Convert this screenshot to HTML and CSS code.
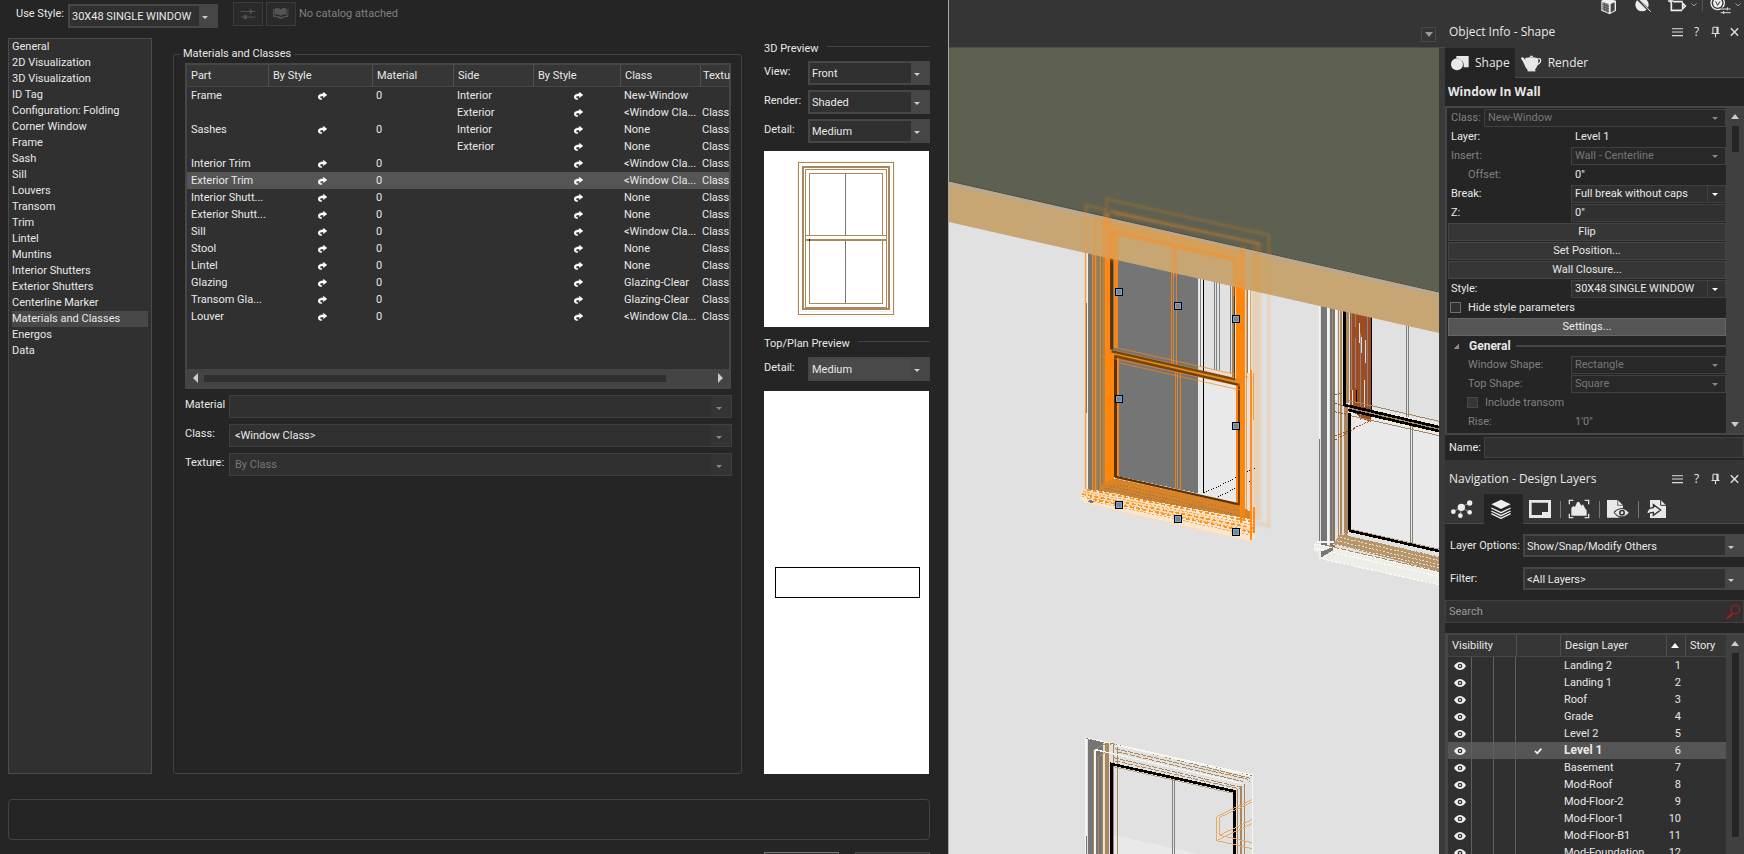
FILE: index.html
```html
<!DOCTYPE html>
<html lang="en">
<head>
<meta charset="utf-8">
<title>Window Settings</title>
<link rel="stylesheet" href="styles.css">
</head>
<body>
<svg class="sprite" aria-hidden="true">
  <symbol id="i-redo" viewBox="0 0 27 24"><path d="M16 0l11 9-11 8v-5c-7 0-10 1-10 4 0 2 2 3 5 3v4C5 23 0 20 0 15 0 9 6 5 16 5z" fill="#fff" stroke="#fff" stroke-width="1"/></symbol>
  <symbol id="i-eye" viewBox="0 0 36 24"><path d="M0 12C6 3 12 0 18 0s12 3 18 12c-6 9-12 12-18 12S6 21 0 12z" fill="#eee"/><circle cx="18" cy="12" r="7" fill="#333"/><circle cx="18" cy="12" r="3" fill="#eee"/></symbol>
  <symbol id="i-menu" viewBox="0 0 30 30"><path d="M0 6h30M0 15h30M0 25h30" stroke="#ddd" stroke-width="3"/></symbol>
  <symbol id="i-pin" viewBox="0 0 30 30"><path d="M8 2h15M8 2v16M19 2v16M22 2v16M4 19h22M15 19v10" stroke="#ddd" stroke-width="3" fill="none"/></symbol>
  <symbol id="i-close" viewBox="0 0 30 30"><path d="M5 5l20 20M25 5L5 25" stroke="#ddd" stroke-width="4"/></symbol>
</svg>
<main class="app">
  <section class="dialog">
    <div class="style-bar">
      <label for="use-style">Use Style:</label>
      <span class="combo combo-style"><select id="use-style"><option>30X48 SINGLE WINDOW</option></select></span>
      <button class="tool" aria-label="Style settings"><svg viewBox="0 0 90 72"><path d="M21 28h48M21 46h48" stroke="#555" stroke-width="3"/><path d="M40 28h12v-6h4v12h-4v-6zM32 40h8v12h-8z" fill="#555" stroke="#555" stroke-width="2"/></svg></button>
      <button class="tool" aria-label="Catalog"><svg viewBox="0 0 90 72"><path d="M19 20v26h10l16 6 14-6h10V20h-3v20l-21 6-22-6V20z" fill="#555"/><path d="M24 18c8-3 15-2 21 3 5-5 12-6 18-3v20c-7-1-13 0-18 4-6-4-13-5-21-4z" fill="#555"/></svg></button>
      <span class="muted">No catalog attached</span>
    </div>
    <div class="dialog-main">
      <ul class="pages">
        <li><button>General</button></li>
        <li><button>2D Visualization</button></li>
        <li><button>3D Visualization</button></li>
        <li><button>ID Tag</button></li>
        <li><button>Configuration: Folding</button></li>
        <li><button>Corner Window</button></li>
        <li><button>Frame</button></li>
        <li><button>Sash</button></li>
        <li><button>Sill</button></li>
        <li><button>Louvers</button></li>
        <li><button>Transom</button></li>
        <li><button>Trim</button></li>
        <li><button>Lintel</button></li>
        <li><button>Muntins</button></li>
        <li><button>Interior Shutters</button></li>
        <li><button>Exterior Shutters</button></li>
        <li><button>Centerline Marker</button></li>
        <li><button class="selected">Materials and Classes</button></li>
        <li><button>Energos</button></li>
        <li><button>Data</button></li>
      </ul>
      <fieldset class="group">
        <legend>Materials and Classes</legend>
        <div class="parts">
          <table class="parts-table">
            <colgroup><col class="c-part"><col class="c-by1"><col class="c-mat"><col class="c-side"><col class="c-by2"><col class="c-class"><col></colgroup>
            <thead><tr><th>Part</th><th>By Style</th><th>Material</th><th>Side</th><th>By Style</th><th>Class</th><th>Textu</th></tr></thead>
            <tbody>
              <tr><td>Frame</td><td><svg><use href="#i-redo"/></svg></td><td>0</td><td>Interior</td><td><svg><use href="#i-redo"/></svg></td><td>New-Window</td><td></td></tr>
              <tr><td></td><td></td><td></td><td>Exterior</td><td><svg><use href="#i-redo"/></svg></td><td>&lt;Window Cla...</td><td>Class</td></tr>
              <tr><td>Sashes</td><td><svg><use href="#i-redo"/></svg></td><td>0</td><td>Interior</td><td><svg><use href="#i-redo"/></svg></td><td>None</td><td>Class</td></tr>
              <tr><td></td><td></td><td></td><td>Exterior</td><td><svg><use href="#i-redo"/></svg></td><td>None</td><td>Class</td></tr>
              <tr><td>Interior Trim</td><td><svg><use href="#i-redo"/></svg></td><td>0</td><td></td><td><svg><use href="#i-redo"/></svg></td><td>&lt;Window Cla...</td><td>Class</td></tr>
              <tr class="selected"><td>Exterior Trim</td><td><svg><use href="#i-redo"/></svg></td><td>0</td><td></td><td><svg><use href="#i-redo"/></svg></td><td>&lt;Window Cla...</td><td>Class</td></tr>
              <tr><td>Interior Shutt...</td><td><svg><use href="#i-redo"/></svg></td><td>0</td><td></td><td><svg><use href="#i-redo"/></svg></td><td>None</td><td>Class</td></tr>
              <tr><td>Exterior Shutt...</td><td><svg><use href="#i-redo"/></svg></td><td>0</td><td></td><td><svg><use href="#i-redo"/></svg></td><td>None</td><td>Class</td></tr>
              <tr><td>Sill</td><td><svg><use href="#i-redo"/></svg></td><td>0</td><td></td><td><svg><use href="#i-redo"/></svg></td><td>&lt;Window Cla...</td><td>Class</td></tr>
              <tr><td>Stool</td><td><svg><use href="#i-redo"/></svg></td><td>0</td><td></td><td><svg><use href="#i-redo"/></svg></td><td>None</td><td>Class</td></tr>
              <tr><td>Lintel</td><td><svg><use href="#i-redo"/></svg></td><td>0</td><td></td><td><svg><use href="#i-redo"/></svg></td><td>None</td><td>Class</td></tr>
              <tr><td>Glazing</td><td><svg><use href="#i-redo"/></svg></td><td>0</td><td></td><td><svg><use href="#i-redo"/></svg></td><td>Glazing-Clear</td><td>Class</td></tr>
              <tr><td>Transom Gla...</td><td><svg><use href="#i-redo"/></svg></td><td>0</td><td></td><td><svg><use href="#i-redo"/></svg></td><td>Glazing-Clear</td><td>Class</td></tr>
              <tr><td>Louver</td><td><svg><use href="#i-redo"/></svg></td><td>0</td><td></td><td><svg><use href="#i-redo"/></svg></td><td>&lt;Window Cla...</td><td>Class</td></tr>
            </tbody>
          </table>
          <div class="hscroll"><i class="tri left"></i><span class="hthumb"></span><i class="tri right"></i></div>
        </div>
        <div class="field"><label for="f-material">Material</label><span class="combo flat"><select id="f-material"><option></option></select></span></div>
        <div class="field"><label for="f-class">Class:</label><span class="combo flat"><select id="f-class"><option>&lt;Window Class&gt;</option></select></span></div>
        <div class="field"><label for="f-texture">Texture:</label><span class="combo flat"><select id="f-texture" disabled><option>By Class</option></select></span></div>
      </fieldset>
      <div class="previews">
        <h2 class="rule-title">3D Preview</h2>
        <div class="pfield"><label for="p-view">View:</label><span class="combo"><select id="p-view"><option>Front</option></select></span></div>
        <div class="pfield"><label for="p-render">Render:</label><span class="combo"><select id="p-render"><option>Shaded</option></select></span></div>
        <div class="pfield"><label for="p-detail">Detail:</label><span class="combo"><select id="p-detail"><option>Medium</option></select></span></div>
        <svg class="preview3d" viewBox="972 453 495 528" shape-rendering="crispEdges">
          <path d="M1066 933h305M1073 483v467h291V483z" fill="none" stroke="#f4f3ec" stroke-width="3"/>
          <g fill="none" stroke="#ab875c">
            <path d="M1075.500 487.500h285v456h-285z" stroke-width="3"/>
            <path d="M1089 501h258v426h-258z" stroke-width="6"/>
            <path d="M1096.500 508.500h243v414h-243zM1108.500 520.500h219v390h-219z" stroke-width="3"/>
          </g>
          <path d="M1098 708h240v12h-240z" fill="#fff"/>
          <path d="M1098 706.500h240" stroke="#ab875c" stroke-width="3"/><path d="M1098 719.500h240" stroke="#ab875c" stroke-width="6"/>
          <path d="M1216.500 521v184M1216.500 723v187" stroke="#777" stroke-width="3"/><path d="M1108.500 716v7" stroke="#000" stroke-width="3"/>
        </svg>
        <h2 class="rule-title second">Top/Plan Preview</h2>
        <div class="pfield plan"><label for="p-plan">Detail:</label><span class="combo hot"><select id="p-plan"><option>Medium</option></select></span></div>
        <div class="plan-view"><div class="plan-shape"></div></div>
      </div>
    </div>
    <div class="help-box"></div>
    <div class="dialog-actions"><button aria-label="OK" class="primary"></button><button aria-label="Cancel"></button></div>
  </section>

  <section class="viewport">
    <div class="view-bar"><button class="view-menu" aria-label="View menu"><i class="tri down"></i></button></div>
    <svg class="scene" viewBox="949 48 490 806" preserveAspectRatio="xMinYMin slice">
      <defs><filter id="soft" x="-10%" y="-10%" width="120%" height="120%"><feGaussianBlur stdDeviation="3"/></filter></defs>
      <path d="M949 48h500v820H949z" fill="#e1e1e1"/>

      <!-- selected window -->
      <g transform="translate(1060 180) scale(.33333)">
        <g shape-rendering="crispEdges">
          <path d="M84 150h20v790l-20-5z" fill="#757575"/>
          <path d="M100 150h60v790l-60-12z" fill="#a5814f"/>
          <path d="M160 160h255v780l-255-55z" fill="#757575"/>
          <path d="M415 200h110v780l-110-30z" fill="#e1e1e1"/>
          <path d="M415 590h120v390l-120-25z" fill="#e9e9e9"/>
          <path d="M76.500 150v790M573 300v720M580 580v140" stroke="#ff850e" stroke-width="3" opacity=".75"/>
          <path d="M82.500 200v730M567 320v260" stroke="#f7f7f2" stroke-width="4"/>
          <path d="M79.500 370v330" stroke="#777" stroke-width="3"/>
          <path d="M98 150v790M107 150v790" stroke="#f98a1a" stroke-width="4"/>
          <path d="M116 150v790M125 150v790" stroke="#85796a" stroke-width="4"/>
          <path d="M121 150v790" stroke="#d68d38" stroke-width="3"/>
          <path d="M135 150h15v360h12v390l-27 20z" fill="#ff850e"/>
          <path d="M154.500 160v352" stroke="#5b3300" stroke-width="9"/>
          <path d="M162 160v345h13V160z" fill="#f28618"/>
          <path d="M167.500 525v365" stroke="#5b3300" stroke-width="9"/>
          <path d="M175.500 530v365" stroke="#f28618" stroke-width="6"/>
          <path d="M336 180v375M342 180v375M349 180v375M348 575v362M354 575v362M361 575v362" stroke="#e08526" stroke-width="3"/>
          <path d="M418 250v310M424 250v310M427 250v310" stroke="#eee" stroke-width="3"/>
          <path d="M421 250v310M464 250v320M471 250v320M478 250v320M512 250v330M562 320v260" stroke="#7c827c" stroke-width="3"/>
          <path d="M431 250v690" stroke="#000" stroke-width="4"/>
          <path d="M431 940l155-76M473 951l110-54" stroke="#000" stroke-width="3" stroke-dasharray="3 5"/>
          <path d="M518 240v350" stroke="#a5825a" stroke-width="6"/>
          <path d="M524 240v360M538 610v365" stroke="#5b3300" stroke-width="5"/>
          <path d="M527 240h27v780h-13V600h-14z" fill="#ff850e"/>
          <path d="M531 615v360" stroke="#ff850e" stroke-width="5"/>
          <path d="M560 320v700" stroke="#f6a04b" stroke-width="3"/>
          <path d="M160 895l380 82 35 20v30l-180-35-275-62v-15z" fill="#d2822b"/>
          <path d="M170 912l380 83M150 918l400 91M135 924l420 96" stroke="#8f7a5c" stroke-width="3" stroke-dasharray="5 5"/>
          <path d="M62 935l14-8 509 93v52l-12 14-497-116-14-10z" fill="#f8e6cf"/>
          <path d="M80 929l500 97M66 942l514 102M80 954l500 104" stroke="#ff931f" stroke-width="5" stroke-dasharray="12 7"/>
          <path d="M70 935l510 100M66 948l514 106M100 964l474 102" stroke="#f9a64f" stroke-width="3" stroke-dasharray="7 5"/>
          <path d="M76 970l500 116" stroke="#f8dcbc" stroke-width="4"/>
          <path d="M86 962l14 5" stroke="#777" stroke-width="7"/>
        </g>
        <path d="M150 508l400 92v14l-400-92z" fill="#d58a38"/>
        <g stroke="#ff850e" stroke-width="3" fill="none" opacity=".7">
          <path d="M165 502l400 90M125 528l425 92M145 520l400 94M175 548l370 83M165 894l375 84"/>
        </g>
        <g stroke="#5b3300" stroke-width="7" fill="none"><path d="M155 514l370 84M165 528l370 86M165 890l375 84"/></g>
        <g shape-rendering="crispEdges"><path d="M552 590v430M544 600v430" stroke="#ff850e" stroke-width="7"/><path d="M573 570v510M582 980v80" stroke="#ff8c1c" stroke-width="4"/></g>
      </g>

      <!-- right-hand window -->
      <g transform="translate(1290 280) scale(.33333)" shape-rendering="crispEdges">
        <path d="M181 90h270v730l-270-65z" fill="#e9e9e9"/><path d="M242 50h210v380l-210-50z" fill="#e1e1e1"/>
        <path d="M93 50h19v755H93zM120 50h16v755h-16z" fill="#757575"/>
        <path d="M88.500 60v730M115 60v740M139 60v300" stroke="#f5f5ef" stroke-width="5"/>
        <path d="M88.500 476v314" stroke="#777" stroke-width="3"/>
        <path d="M127 60v735M145 90v690M153 90v680" stroke="#ab875c" stroke-width="4"/>
        <path d="M162 380h12v390h-12zM168 80h9v290h-9z" fill="#ab875c"/>
        <path d="M181 80h62v346l-30-10-32-30z" fill="#9f4c22"/>
        <path d="M208 130v60M214 170v50M226 180v70M223 300v80M187 330v50" stroke="#e1e1e1" stroke-width="4"/>
        <path d="M196 90v50M196 175v150M211 160v260M232 90v290M184 90v240" stroke="#888" stroke-width="3"/>
        <path d="M199 330v35M245 110v280" stroke="#000" stroke-width="4"/>
        <path d="M350 120v290M356 120v290M362 435v360M368 435v360" stroke="#7c827c" stroke-width="3"/>
        <path d="M135 345l22-5M135 370l40 12M135 395l35 8M135 468l40-15M135 480l60-35M190 445l50-22" stroke="#9f4c22" stroke-width="3" stroke-dasharray="6 3"/>
        <path d="M178 362l270 62M178 406l270 61" stroke="#ab875c" stroke-width="3"/>
        <path d="M178 382l270 64" stroke="#ab875c" stroke-width="12"/>
        <path d="M164 90v285M179 400v350" stroke="#000" stroke-width="9"/>
        <path d="M160 374l290 68M175 390l275 64" stroke="#000" stroke-width="8"/>
        <path d="M150 762l300 68v44l-320-82z" fill="#b8966b"/>
        <path d="M140 782l310 72M150 772l300 70M130 792l320 72M160 760l290 72" stroke="#e9e0d0" stroke-width="3" stroke-dasharray="6 5"/>
        <path d="M178 752l272 62" stroke="#000" stroke-width="8"/><path d="M184 748l266 60" stroke="#ab875c" stroke-width="2"/>
        <path d="M75 790l375 90v34L88 835z" fill="#eeeee9"/>
        <path d="M76 792l374 86M82 806l368 84M88 835l362 80" stroke="#fbfbf5" stroke-width="4" stroke-dasharray="8 4"/>
        <path d="M93 815l36-14v10l-36 22z" fill="#777"/><path d="M75 792v18h12M82 786h50" stroke="#f5f5ef" stroke-width="4" fill="none"/>
        <path d="M112 797l338 78" stroke="#ab875c" stroke-width="3" stroke-dasharray="16 5"/>
      </g>

      <!-- lower window -->
      <g transform="translate(1060 710) scale(.33333)" shape-rendering="crispEdges">
        <path d="M84 88l46 8v340H84z" fill="#757575"/>
        <path d="M160 375l250 55v10H160z" fill="#e9e9e9"/>
        <path d="M79 84v350M106 120v320" stroke="#f5f5ef" stroke-width="5"/><path d="M79.500 378v60" stroke="#777" stroke-width="3"/>
        <path d="M79 84l498 111v240" stroke="#f8f8f2" stroke-width="4" fill="none"/>
        <path d="M79 86l498 112" stroke="#8b8375" stroke-width="3" stroke-dasharray="5 7"/>
        <path d="M101 120v315M115 140v295M127 130v305" stroke="#ab875c" stroke-width="3"/>
        <path d="M135 100h12v335h-12z" fill="#ab875c"/><path d="M161 100v335M172 110v325" stroke="#ab875c" stroke-width="3"/>
        <path d="M101 120l34-18M115 140l30-20" stroke="#ab875c" stroke-width="3"/>
        <path d="M150 100l420 105M165 116l400 92M170 125l380 90M160 143l380 88M165 153l375 84" stroke="#ab875c" stroke-width="3" stroke-dasharray="16 4" fill="none"/>
        <path d="M170 106l400 92M106 119l440 101" stroke="#f5f5ef" stroke-width="4" fill="none"/>
        <path d="M154.500 435V162l370 82v192" stroke="#000" stroke-width="8" fill="none"/>
        <path d="M160 170l360 80" stroke="#ab875c" stroke-width="2"/>
        <path d="M338 208v230M344 208v230" stroke="#7c827c" stroke-width="3"/>
        <path d="M532 238v200M553 222v216M568 212v5" stroke="#ab875c" stroke-width="3"/><path d="M543 228v210" stroke="#ab875c" stroke-width="7"/>
        <path d="M577 268l-107 52v72l107 24M577 276l-98 46v54l98 22M470 392l107-52M479 376l98-48" stroke="#e3aa6c" stroke-width="3" fill="none"/>
      </g>

      <!-- eave band and roof -->
      <path d="M949 181l490 111v41L949 222z" fill="#c8a674"/>
      <path d="M949 183l490 111" stroke="#b8a892" stroke-width="4"/>
      <path d="M949 48h500v246L949 181z" fill="#5e6051"/>
      <path d="M949 181l490 111" stroke="#4c4c3e" stroke-width="1"/>

      <!-- selection glow -->
      <g transform="translate(1060 180) scale(.33333)" fill="none" stroke="#ff8a12">
        <g filter="url(#soft)">
          <path d="M78 930V76l62 14M140 500V57l487 108v873l-40-10" stroke-width="9" opacity=".2"/>
          <path d="M150 94l450 98M165 100l430 90" stroke-width="9" opacity=".35"/>
          <path d="M104 230V114l440 102v120M128 230V130l410 92" stroke-width="10" opacity=".3"/>
          <path d="M155 240v-86l372 84v110" stroke-width="13" opacity=".55"/>
          <path d="M343 200v90" stroke-width="14" opacity=".4"/>
          <path d="M140 240V100M168 250V160M548 330V200" stroke-width="18" opacity=".3"/>
          <path d="M596 190v830M585 200v820" stroke-width="16" opacity=".18"/>
          <path d="M70 935l510 115M150 905l430 95" stroke-width="16" opacity=".15"/>
          <path d="M140 235v680M545 300v690M150 520l400 88" stroke-width="18" opacity=".25"/>
        </g>
        <g shape-rendering="crispEdges" fill="#8b8175" stroke="none">
          <g id="grip"><path d="M165 324h24v24h-24z" fill="#000"/><path d="M168 327h18v18h-18z" fill="#62a8fb"/><path d="M172 331h10v10h-10z"/></g>
          <use href="#grip" x="177" y="42"/><use href="#grip" x="351" y="81"/><use href="#grip" y="321"/><use href="#grip" x="351" y="402"/>
          <use href="#grip" y="639"/><use href="#grip" x="177" y="681"/><use href="#grip" x="351" y="720"/>
        </g>
      </g>
    </svg>
  </section>

  <aside class="palettes">
    <div class="top-tools">
      <svg viewBox="480 0 432 45">
        <path d="M484 2l16-7 28 7v30l-19 11-25-11z" fill="#eee"/><path d="M487 5l20 8v26l-20-9z" fill="#999"/><path d="M487 12l20 8M487 19l20 8M487 26l20 8M494 8v26M501 10v28" stroke="#333" stroke-width="2"/><path d="M512 12l12-5v24l-12 7z" fill="#444"/>
        <circle cx="606" cy="14" r="20" fill="#eee"/><path d="M588-8l46 46" stroke="#333" stroke-width="7"/><path d="M592-8l40 43" stroke="#eee" stroke-width="3"/>
        <path d="M684 3h16M692-4v12M694 7v24h32M700 5h28M728 10l8 8-8 8z" stroke="#eee" stroke-width="5" fill="none"/>
        <path d="M754 10l8 8 8-8M886 10l8 8 8-8" stroke="#999" stroke-width="3" fill="none"/><path d="M787 0v35" stroke="#555" stroke-width="3"/>
        <circle cx="833" cy="9" r="20" stroke="#eee" stroke-width="4" fill="none"/><circle cx="833" cy="9" r="14" fill="#eee"/><path d="M827 4l6 12 7-12" stroke="#333" stroke-width="3" fill="none"/><path d="M842 27h30M842 38h30" stroke="#333" stroke-width="9"/><path d="M842 27h30M842 38h30M862 22v9M851 33v9" stroke="#ddd" stroke-width="3"/>
      </svg>
    </div>
    <header class="palette-title"><h2>Object Info - Shape</h2><button aria-label="Menu"><svg><use href="#i-menu"/></svg></button><button class="q">?</button><button aria-label="Pin"><svg><use href="#i-pin"/></svg></button><button aria-label="Close"><svg><use href="#i-close"/></svg></button></header>
    <div class="tabs">
      <button class="tab active"><svg class="ic-shape" viewBox="0 0 54 48"><path d="M16 3h37v34H38C40 20 32 12 16 10z" fill="#e8e8e8"/><circle cx="18" cy="28" r="18" fill="#e8e8e8"/></svg>Shape</button>
      <button class="tab"><svg class="ic-pot" viewBox="0 0 64 50"><path d="M13 8c10-3 28-3 36 0 6 3 6 22-8 38H22C10 36 12 26 0 10l2-4c7 0 9 6 11 8zM28 1h8v4h-8z" fill="#e8e8e8"/><path d="M48 14c4-6 12-5 12 1 0 8-6 12-15 16" fill="none" stroke="#e8e8e8" stroke-width="4"/><path d="M20 47h24" stroke="#e8e8e8" stroke-width="4"/></svg>Render</button>
    </div>
    <h3 class="object-name">Window In Wall</h3>
    <div class="shape-pane">
      <form class="shape-form">
        <div class="row dim class-row"><label for="o-class">Class:</label><span class="combo thin"><select id="o-class" disabled><option>New-Window</option></select></span></div>
        <div class="row"><span>Layer:</span><output>Level 1</output></div>
        <div class="row dim"><label for="o-insert">Insert:</label><span class="combo thin"><select id="o-insert" disabled><option>Wall - Centerline</option></select></span></div>
        <div class="row dim deep"><span>Offset:</span><output class="lit">0"</output></div>
        <div class="row"><label for="o-break">Break:</label><span class="combo thin live"><select id="o-break"><option>Full break without caps</option></select></span></div>
        <div class="row"><label for="o-z">Z:</label><input id="o-z" value="0&quot;"></div>
        <div class="row"><button type="button">Flip</button></div>
        <div class="row"><button type="button">Set Position...</button></div>
        <div class="row"><button type="button">Wall Closure...</button></div>
        <div class="row"><label for="o-style">Style:</label><span class="combo thin live"><select id="o-style"><option>30X48 SINGLE WINDOW</option></select></span></div>
        <div class="row check"><input type="checkbox" id="o-hide"><label for="o-hide">Hide style parameters</label></div>
        <div class="row"><button type="button" class="hot">Settings...</button></div>
        <div class="row section"><i class="corner"></i><h4>General</h4></div>
        <div class="row dim deep"><label for="o-ws">Window Shape:</label><span class="combo thin"><select id="o-ws" disabled><option>Rectangle</option></select></span></div>
        <div class="row dim deep"><label for="o-ts">Top Shape:</label><span class="combo thin"><select id="o-ts" disabled><option>Square</option></select></span></div>
        <div class="row dim check deep"><input type="checkbox" id="o-tr" disabled><label for="o-tr">Include transom</label></div>
        <div class="row dim deep"><span>Rise:</span><output>1'0"</output></div>
      </form>
      <div class="vscroll"><i class="tri up"></i><span class="vthumb short"></span><i class="tri down"></i></div>
    </div>
    <div class="name-row"><label for="o-name">Name:</label><input id="o-name"></div>

    <header class="palette-title nav"><h2>Navigation - Design Layers</h2><button aria-label="Menu"><svg><use href="#i-menu"/></svg></button><button class="q">?</button><button aria-label="Pin"><svg><use href="#i-pin"/></svg></button><button aria-label="Close"><svg><use href="#i-close"/></svg></button></header>
    <div class="tabs icons">
      <button class="tab" aria-label="Classes"><svg viewBox="0 0 66 60"><path d="M7 38l24-14 24-12M31 24l-3 26M31 24l24 16" stroke="#999" stroke-width="3"/><g fill="#eee"><circle cx="31" cy="25" r="11"/><circle cx="7" cy="38" r="7"/><circle cx="56" cy="12" r="8"/><circle cx="28" cy="50" r="7"/><circle cx="56" cy="40" r="7"/></g></svg></button>
      <button class="tab active" aria-label="Design Layers"><svg viewBox="0 0 66 60"><path d="M33 2l29 14-29 14L4 16z" fill="#eee"/><path d="M4 27l29 14 29-14M4 36l29 14 29-14M4 44l29 14 29-14" fill="none" stroke="#eee" stroke-width="4"/></svg></button>
      <button class="tab" aria-label="Sheet Layers"><svg viewBox="0 0 66 60"><path d="M0 3h66v54H0z" fill="#e8e8e8"/><path d="M8 11h49v28H39v9H8z" fill="#333"/></svg></button>
      <button class="tab sep" aria-label="Viewports"><svg viewBox="0 0 66 60"><path d="M4 16V4h12M50 4h12v12M62 44v12H50M16 56H4V44" fill="none" stroke="#ddd" stroke-width="4"/><path d="M10 50V26l6-5 5 3 6-14 6-2 7 12 5-4 6 12 5 6v16z" fill="#e8e8e8"/></svg></button>
      <button class="tab sep" aria-label="Saved Views"><svg viewBox="0 0 66 60"><path d="M0 3h32l16 16v8C32 28 24 34 20 40c4 8 10 12 18 16H0z" fill="#e8e8e8"/><path d="M32 3v16h16" stroke="#333" stroke-width="2" fill="none"/><path d="M22 41c12-16 32-16 44 0-12 16-32 16-44 0z" fill="#e8e8e8" stroke="#333" stroke-width="2"/><circle cx="45" cy="41" r="9" fill="#333"/><circle cx="45" cy="41" r="4" fill="#eee"/></svg></button>
      <button class="tab sep" aria-label="References"><svg viewBox="0 0 66 60"><path d="M12 57V3h32l16 16v38z" fill="#e8e8e8"/><path d="M44 3v16h16" stroke="#333" stroke-width="3" fill="none"/><path d="M2 46c0-16 8-20 20-20v-9l22 16-22 16v-9c-8 0-12 2-20 6z" fill="#e8e8e8" stroke="#333" stroke-width="4"/></svg></button>
    </div>
    <div class="nav-form">
      <div class="nfield"><label for="n-opt">Layer Options:</label><span class="combo"><select id="n-opt"><option>Show/Snap/Modify Others</option></select></span></div>
      <div class="nfield"><label for="n-filter">Filter:</label><span class="combo"><select id="n-filter"><option>&lt;All Layers&gt;</option></select></span></div>
      <div class="search"><input type="search" aria-label="Search" placeholder="Search"><svg viewBox="0 0 45 45"><circle cx="28" cy="15" r="13" fill="none" stroke="#b01c1c" stroke-width="3"/><path d="M20 26L3 42" stroke="#b01c1c" stroke-width="6"/></svg></div>
    </div>
    <div class="layers">
      <table class="layers-table">
        <colgroup><col class="l-eye"><col class="l-v"><col class="l-v"><col class="l-chk"><col class="l-name"><col class="l-num"><col></colgroup>
        <thead><tr><th colspan="3">Visibility</th><th></th><th>Design Layer</th><th aria-label="Order"><i class="tri up white"></i></th><th>Story</th></tr></thead>
        <tbody>
          <tr><td><svg><use href="#i-eye"/></svg></td><td></td><td></td><td></td><td>Landing 2</td><td>1</td><td></td></tr>
          <tr><td><svg><use href="#i-eye"/></svg></td><td></td><td></td><td></td><td>Landing 1</td><td>2</td><td></td></tr>
          <tr><td><svg><use href="#i-eye"/></svg></td><td></td><td></td><td></td><td>Roof</td><td>3</td><td></td></tr>
          <tr><td><svg><use href="#i-eye"/></svg></td><td></td><td></td><td></td><td>Grade</td><td>4</td><td></td></tr>
          <tr><td><svg><use href="#i-eye"/></svg></td><td></td><td></td><td></td><td>Level 2</td><td>5</td><td></td></tr>
          <tr class="selected"><td><svg><use href="#i-eye"/></svg></td><td></td><td></td><td><svg viewBox="0 0 36 24"><path d="M9 12l7 7L28 5" fill="none" stroke="#fff" stroke-width="5"/></svg></td><td><b>Level 1</b></td><td>6</td><td></td></tr>
          <tr><td><svg><use href="#i-eye"/></svg></td><td></td><td></td><td></td><td>Basement</td><td>7</td><td></td></tr>
          <tr><td><svg><use href="#i-eye"/></svg></td><td></td><td></td><td></td><td>Mod-Roof</td><td>8</td><td></td></tr>
          <tr><td><svg><use href="#i-eye"/></svg></td><td></td><td></td><td></td><td>Mod-Floor-2</td><td>9</td><td></td></tr>
          <tr><td><svg><use href="#i-eye"/></svg></td><td></td><td></td><td></td><td>Mod-Floor-1</td><td>10</td><td></td></tr>
          <tr><td><svg><use href="#i-eye"/></svg></td><td></td><td></td><td></td><td>Mod-Floor-B1</td><td>11</td><td></td></tr>
          <tr><td><svg><use href="#i-eye"/></svg></td><td></td><td></td><td></td><td>Mod-Foundation</td><td>12</td><td></td></tr>
        </tbody>
      </table>
      <div class="vscroll"><i class="tri up"></i><span class="vthumb long"></span></div>
    </div>
  </aside>
</main>
</body>
</html>
```
FILE: styles.css
```css
:root {
  --bg: #252525;
  --field: #303030;
  --chrome: #353535;
  --line: #464646;
  --text: #e8e8e8;
  --dim: #808080;
}
* { box-sizing: border-box; }
body {
  margin: 0;
  background: var(--bg);
  color: var(--text);
  font: 11px/16px Roboto, sans-serif;
}
button, input, select { font: inherit; color: inherit; margin: 0; padding: 0; border: 0; background: none; border-radius: 0; text-align: left; }
select { appearance: none; opacity: 1; }
h2, h3, h4, ul { margin: 0; padding: 0; font: inherit; list-style: none; }
.sprite { position: absolute; width: 0; height: 0; }

.app {
  display: grid;
  grid-template-columns: minmax(0, 949fr) minmax(0, 496fr) minmax(0, 299fr);
  height: 100vh;
  overflow: hidden;
}

/* small triangles */
.tri { width: 0; height: 0; border: 4px solid transparent; flex: none; }
.tri.left { border-width: 5px 5px 5px 0; border-right-color: #ccc; }
.tri.right { border-width: 5px 0 5px 5px; border-left-color: #ccc; }
.tri.up { border-width: 0 4px 5px; border-bottom-color: #ccc; }
.tri.down { border-width: 5px 4px 0; border-top-color: #ccc; }
.tri.white { display: block; border-bottom-color: #fff; }
.view-menu .tri { border-top-color: #999; }

/* drop-downs */
.combo { position: relative; display: flex; min-width: 0; height: 24px; border: 2px solid var(--line); background: var(--line); }
.combo select { flex: 1; min-width: 0; margin-right: 17px; padding: 2px 2px 0; background: var(--field); }
.combo::after { content: ""; position: absolute; right: 8px; top: 50%; border: 3px solid transparent; border-top-color: #ccc; border-bottom: 0; pointer-events: none; }
.combo.hot select { background: #4a4a4a; }
.combo.flat { height: 23px; border: 1px solid #3f3f3f; background: #343434; }
.combo.flat select { padding: 0 5px; margin-right: 20px; }
.combo.flat::after { border-top-color: #888; right: 9px; }
.combo select:disabled { color: #777; }

/* settings dialog */
.dialog { display: flex; flex-direction: column; height: 100vh; padding: 0 18px 0 8px; border-right: 1px solid #a8a8a8; overflow: hidden; }
.style-bar { display: flex; align-items: flex-start; height: 38px; flex: none; padding: 2px 0 0 8px; }
.style-bar label { width: 52px; padding-top: 4px; white-space: nowrap; }
.combo-style { width: 150px; margin: 2px 15px 0 0; }
.tool { width: 30px; height: 24px; margin-right: 3px; border: 1px solid #3c3c3c; background: #2a2a2a; }
.tool svg { display: block; width: 28px; height: 22px; }
.muted { padding-top: 4px; color: var(--dim); }
.dialog-main { display: flex; flex: 1; min-height: 0; }
.pages { width: 144px; flex: none; border: 1px solid #4a4a4a; background: var(--field); }
.pages li { padding: 0 3px; }
.pages button { display: block; width: 100%; height: 16px; white-space: nowrap; }
.pages .selected { background: #484848; }
.group { flex: 1; min-width: 0; margin: 8px 22px 0 21px; padding: 1px 10px 0 11px; border: 1px solid #434343; border-radius: 3px; }
.group legend { padding: 0 3px; margin-left: -5px; }
.parts { display: flex; flex-direction: column; height: 326px; border: 2px solid var(--line); background: var(--field); }
table { width: 100%; table-layout: fixed; border-collapse: separate; border-spacing: 0; }
th { height: 22px; padding: 0 0 0 4px; font-weight: normal; text-align: left; background: #363636; border-bottom: 1px solid var(--line); border-left: 1px solid #505050; }
th:first-child { border-left: 0; }
td { height: 17px; padding: 0 0 0 4px; line-height: 16px; }
th, td { white-space: nowrap; }
tr.selected td { background: #555; }
.parts-table td svg { display: block; width: 9px; height: 8px; margin: 0 auto; }
.parts-table th:last-child, .parts-table td:last-child { padding-left: 2px; }
.c-part { width: 81px; } .c-by1 { width: 104px; } .c-mat { width: 81px; } .c-side { width: 80px; } .c-by2 { width: 87px; } .c-class { width: 80px; }
.hscroll { display: flex; align-items: center; gap: 6px; height: 18px; margin-top: auto; padding: 0 6px; background: #444; }
.hthumb { flex: 1; height: 7px; margin-right: 46px; background: #2f2f2f; }
.field { display: flex; align-items: center; margin-top: 6px; }
.field label { width: 44px; flex: none; padding-bottom: 4px; }
.field .combo { flex: 1; margin-right: -1px; }

.previews { display: flex; flex-direction: column; width: 166px; flex: none; padding-top: 1px; }
.rule-title { display: flex; gap: 8px; white-space: nowrap; margin: 2px 0 4px; }
.rule-title::after { content: ""; flex: 1; height: 1px; margin-top: 5px; background: #434343; }
.rule-title.second { margin: 9px 0 5px; }
.pfield { display: flex; margin-bottom: 5px; }
.pfield label { width: 44px; flex: none; padding-top: 3px; }
.pfield .combo { flex: 1; }
.preview3d { display: block; width: 165px; height: 176px; margin-top: 3px; background: #fff; }
.plan { margin-bottom: 10px; }
.plan-view { display: flex; flex: 1; align-items: center; width: 165px; padding: 0 9px 0 11px; background: #fff; }
.plan-shape { flex: 1; height: 31px; border: 1px solid #000; }
.help-box { flex: none; height: 41px; margin: 25px 0 12px; border: 1px solid #434343; border-radius: 4px; }
.dialog-actions { display: flex; justify-content: flex-end; flex: none; gap: 16px; height: 2px; overflow: hidden; }
.dialog-actions button { width: 75px; height: 24px; border: 1px solid #4a4a4a; background: #303030; }
.dialog-actions .primary { border-color: #777; }

/* 3D view */
.viewport { display: flex; flex-direction: column; height: 100vh; padding-right: 6px; background: #3a3a3a; overflow: hidden; }
.view-bar { display: flex; flex: none; align-items: flex-end; justify-content: flex-end; height: 48px; padding: 0 9px 5px 0; margin-right: -6px; border-bottom: 1px solid #4a4a4a; background: var(--chrome); }
.view-menu { display: grid; place-items: center; width: 15px; height: 15px; border: 1px solid #484848; }
.scene { display: block; width: 100%; flex: 1; min-height: 0; }

/* palettes */
.palettes { display: flex; flex-direction: column; height: 100vh; background: var(--bg); overflow: hidden; }
.top-tools { flex: none; height: 18px; background: var(--chrome); }
.top-tools svg { display: block; width: 144px; height: 15px; margin-left: auto; }
.palette-title { display: flex; align-items: center; flex: none; gap: 8px; height: 30px; padding: 0 4px 2px; background: var(--chrome); }
.palette-title h2 { flex: 1; font: 12px/16px "Open Sans", sans-serif; white-space: nowrap; }
.palette-title button { width: 11px; height: 12px; text-align: center; }
.palette-title svg { display: block; width: 11px; height: 12px; }
.palette-title .q { font: 12px/12px "Open Sans", sans-serif; }
.tabs { display: flex; flex: none; height: 30px; background: linear-gradient(#4a4a4a, #4a4a4a) bottom / 100% 1px no-repeat, var(--chrome); }
.tab { display: flex; align-items: center; gap: 6px; padding: 0 5px 0 6px; font: 12px/16px "Open Sans", sans-serif; }
.tab.active { background: #242424; }
.ic-shape { width: 18px; height: 16px; } .ic-pot { width: 21px; height: 17px; }
.object-name { flex: none; height: 28px; padding: 6px 3px; font: bold 12px/16px "Open Sans", sans-serif; }
.shape-pane { display: flex; flex: none; border: 2px solid var(--line); border-right: 0; }
.shape-form { flex: 1; min-width: 0; padding-bottom: 2px; }
.row { display: flex; align-items: center; height: 19px; padding-left: 4px; }
.row > label, .row > span:first-child { width: 120px; flex: none; }
.row.dim { color: var(--dim); }
.row output { padding-left: 4px; }
.row output.lit { color: var(--text); }
.row.deep { padding-left: 21px; }
.row.deep > label, .row.deep > span:first-child { width: 103px; }
.row.class-row > label { width: 33px; }
.combo.thin { flex: 1; height: 18px; border: 1px solid #404040; background: #282828; }
.combo.thin select { padding: 0 3px; background: transparent; }
.combo.thin::after { border-top-color: #888; top: 7px; right: 7px; }
.combo.thin.live { background: var(--field); }
.combo.thin.live select { border-right: 1px solid #404040; }
.combo.thin.live::after { border-top-color: #fff; }
.row input:not([type]) { flex: 1; min-width: 0; height: 18px; padding: 0 3px; border: 1px solid #404040; background: var(--field); }
.row button { flex: 1; height: 18px; margin-left: -3px; text-align: center; border: 1px solid #454545; background: #363636; }
.row button.hot { background: #555; border-color: #666; }
.row input[type="checkbox"] { appearance: none; width: 11px; height: 11px; margin: 0 7px 0 -1px; border: 1px solid #707070; background: var(--field); }
.row input[type="checkbox"]:disabled { border-color: #484848; background: #363636; }
.row.check > label { width: auto; }
.section h4 { margin: 0 5px 0 10px; font: bold 12px/16px Roboto, sans-serif; }
.section::after { content: ""; flex: 1; height: 2px; background: var(--line); }
.corner { width: 6px; height: 6px; margin-left: 2px; background: linear-gradient(135deg, transparent 50%, #888 50%); }
.vscroll { display: flex; flex: none; flex-direction: column; align-items: center; width: 18px; padding: 6px 0; background: #404040; }
.vthumb { width: 7px; background: var(--bg); }
.vthumb.short { height: 26px; margin: 7px 0 auto; }
.vthumb.long { height: 184px; margin-top: 7px; }
.name-row { display: flex; align-items: center; flex: none; height: 25px; padding-left: 4px; }
.name-row label { width: 35px; }
.name-row input { flex: 1; min-width: 0; height: 21px; border: 1px solid #404040; background: var(--field); }
.palette-title.nav { height: 34px; padding: 3px 4px 0; }
.tabs.icons .tab { position: relative; justify-content: center; width: 39px; padding: 0 6px 0 0; }
.tabs.icons svg { width: 22px; height: 20px; flex: none; }
.tabs .sep::before { content: ""; position: absolute; left: -2px; top: 7px; width: 1px; height: 17px; background: #777; }
.nav-form { display: flex; flex: none; flex-direction: column; gap: 10px; padding-top: 10px; }
.nfield { display: flex; align-items: center; padding-left: 5px; }
.nfield label { width: 73px; flex: none; white-space: nowrap; }
.nfield .combo { flex: 1; height: 23px; }
.search { position: relative; display: flex; height: 23px; border: 1px solid #404040; background: var(--field); }
.search input { flex: 1; min-width: 0; padding: 0 3px; appearance: none; }
.search input::placeholder { color: #999; opacity: 1; }
.search svg { position: absolute; right: 2px; top: 3px; width: 15px; height: 16px; }
.layers { display: flex; flex: 1; min-height: 0; align-items: stretch; margin-top: 10px; border: 2px solid var(--line); border-width: 2px 0 0 3px; background: var(--field); overflow: hidden; }
.layers-table { flex: 1; min-width: 0; align-self: flex-start; }
.layers-table svg { display: block; width: 12px; height: 8px; margin: 0 auto; }
.l-eye { width: 24px; } .l-v { width: 22px; } .l-chk { width: 44px; } .l-name { width: 106px; } .l-num { width: 19px; }
.layers-table td:nth-child(-n+3) { padding: 0; border-right: 1px solid #606060; }
.layers-table td:nth-child(4) { padding: 0; }
.layers-table td:nth-child(6) { padding: 0 4px 0 0; text-align: right; }
.layers-table b { font-size: 12px; }
```
